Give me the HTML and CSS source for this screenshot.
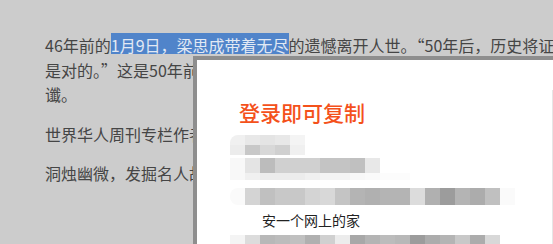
FILE: index.html
```html
<!DOCTYPE html>
<html lang="zh-CN">
<head>
<meta charset="utf-8">
<title>登录即可复制</title>
<link rel="stylesheet" href="styles.css">
</head>
<body>
<article class="article">
  <p class="para">46年前的<span class="sel">1月9日，梁思成带着无尽</span>的遗憾离开人世。“50年后，历史将证明我<br>是对的。”这是50年前梁思成留下的一句话，如今已一语成<br>谶。</p>
  <p class="para">世界华人周刊专栏作者，建筑史研究者</p>
  <p class="para">洞烛幽微，发掘名人故事背后的历史真相</p>
</article>

<div class="modal">
  <h2 class="modal-title">登录即可复制</h2>
  <div class="mosaic band-a1">
    <i class="gf0 round"></i><i class="ge8"></i><i class="ge4"></i><i class="ge8"></i><i class="gf4"></i>
  </div>
  <div class="mosaic band-a2">
    <i class="gec"></i><i class="gc8"></i><i class="gd8"></i><i class="gd0"></i><i class="gf0"></i>
  </div>
  <div class="mosaic band-b1">
    <i class="gf8"></i><i class="ge4"></i><i class="gbc"></i><i class="gd0"></i><i class="gd0"></i><i class="gd0"></i><i class="gc4"></i><i class="gc4"></i><i class="gc0"></i><i class="ge8"></i>
  </div>
  <div class="mosaic band-b2">
    <i class="gf8"></i><i class="gf0"></i><i class="gec"></i><i class="gec"></i><i class="gec"></i><i class="gf0"></i><i class="gf4"></i><i class="gf4"></i><i class="gf8"></i><i class="gfa"></i><i class="gfc"></i><i class="gfc"></i>
  </div>
  <div class="mosaic band-c">
    <i class="gfa round"></i><i class="gd4"></i><i class="gc0"></i><i class="gc8"></i><i class="gc8"></i><i class="gd4"></i><i class="gd8"></i><i class="gc4"></i><i class="gb4"></i><i class="gb0"></i><i class="gb4"></i><i class="gb4"></i><i class="gdc"></i><i class="gb0"></i><i class="g9c"></i><i class="gb4"></i><i class="gac"></i><i class="gc0"></i><i class="gfa"></i>
  </div>
  <p class="modal-text">安一个网上的家</p>
  <div class="mosaic band-d">
    <i class="gf4"></i><i class="gdc"></i><i class="gb8"></i><i class="gbc"></i><i class="gc0"></i><i class="gb0"></i><i class="gd0"></i><i class="gec"></i><i class="ga8"></i><i class="gb4"></i><i class="gbc"></i><i class="gb8"></i><i class="g9c"></i><i class="gac"></i><i class="gb4"></i><i class="gc8"></i><i class="gac"></i><i class="gd8"></i>
  </div>
</div>
</body>
</html>
```

FILE: styles.css
```css
html, body {
  margin: 0;
  padding: 0;
  overflow: hidden;
}

body {
  width: 553px;
  height: 244px;
  background: #cccccc;
  font-family: "Noto Sans CJK SC", "Microsoft YaHei", sans-serif;
  color: #454545;
  position: relative;
}

.article {
  padding: 33px 0 0 45px;
}

.para {
  margin: 0 0 15px;
  font-size: 16px;
  line-height: 24.5px;
  white-space: nowrap;
}

.sel {
  color: #e2e9f4;
  background-image: linear-gradient(#5084ca, #5084ca);
  background-size: 100% 21px;
  background-repeat: no-repeat;
  background-position: 0 0;
}

.modal {
  position: absolute;
  left: 193px;
  top: 56px;
  width: 420px;
  height: 230px;
  background: #ffffff;
  border: 4px solid #8e8e8e;
  padding: 40px 0 0 33px;
  box-sizing: border-box;
  display: flex;
  flex-direction: column;
  align-items: flex-start;
}

.modal::after {
  content: "";
  position: absolute;
  left: 355px;
  top: 30px;
  bottom: 0;
  width: 1px;
  background: #e6e6e6;
}

.modal-title {
  margin: 0 0 0 9px;
  font-size: 21px;
  line-height: 24px;
  font-weight: 500;
  color: #f4511b;
}

.mosaic {
  display: flex;
}

.mosaic i {
  display: block;
  width: 15px;
}

.mosaic i.round {
  border-radius: 8px 0 0 8px;
}

.band-a1 { margin-top: 11px; }
.band-a1 i { height: 10px; }
.band-a1 i.round { border-radius: 8px 0 0 0; }
.band-a2 i { height: 10px; }
.band-b1 { margin-top: 3px; }
.band-b1 i { height: 15px; }
.band-b2 i { height: 7px; }
.band-c { margin-top: 8px; }
.band-c i { height: 17px; }
.band-d { margin-top: 5px; }
.band-d i { height: 15px; }

.modal-text {
  margin: 5px 0 0 32px;
  font-size: 14px;
  line-height: 20px;
  color: #222222;
}

.g9c { background: #9c9c9c; }
.ga8 { background: #a8a8a8; }
.gac { background: #acacac; }
.gb0 { background: #b0b0b0; }
.gb4 { background: #b4b4b4; }
.gb8 { background: #b8b8b8; }
.gbc { background: #bcbcbc; }
.gc0 { background: #c0c0c0; }
.gc4 { background: #c4c4c4; }
.gc8 { background: #c8c8c8; }
.gd0 { background: #d0d0d0; }
.gd4 { background: #d4d4d4; }
.gd8 { background: #d8d8d8; }
.gdc { background: #dcdcdc; }
.ge4 { background: #e4e4e4; }
.ge8 { background: #e8e8e8; }
.gec { background: #ececec; }
.gf0 { background: #f0f0f0; }
.gf4 { background: #f4f4f4; }
.gf8 { background: #f8f8f8; }
.gfa { background: #fafafa; }
.gfc { background: #fcfcfc; }
```
